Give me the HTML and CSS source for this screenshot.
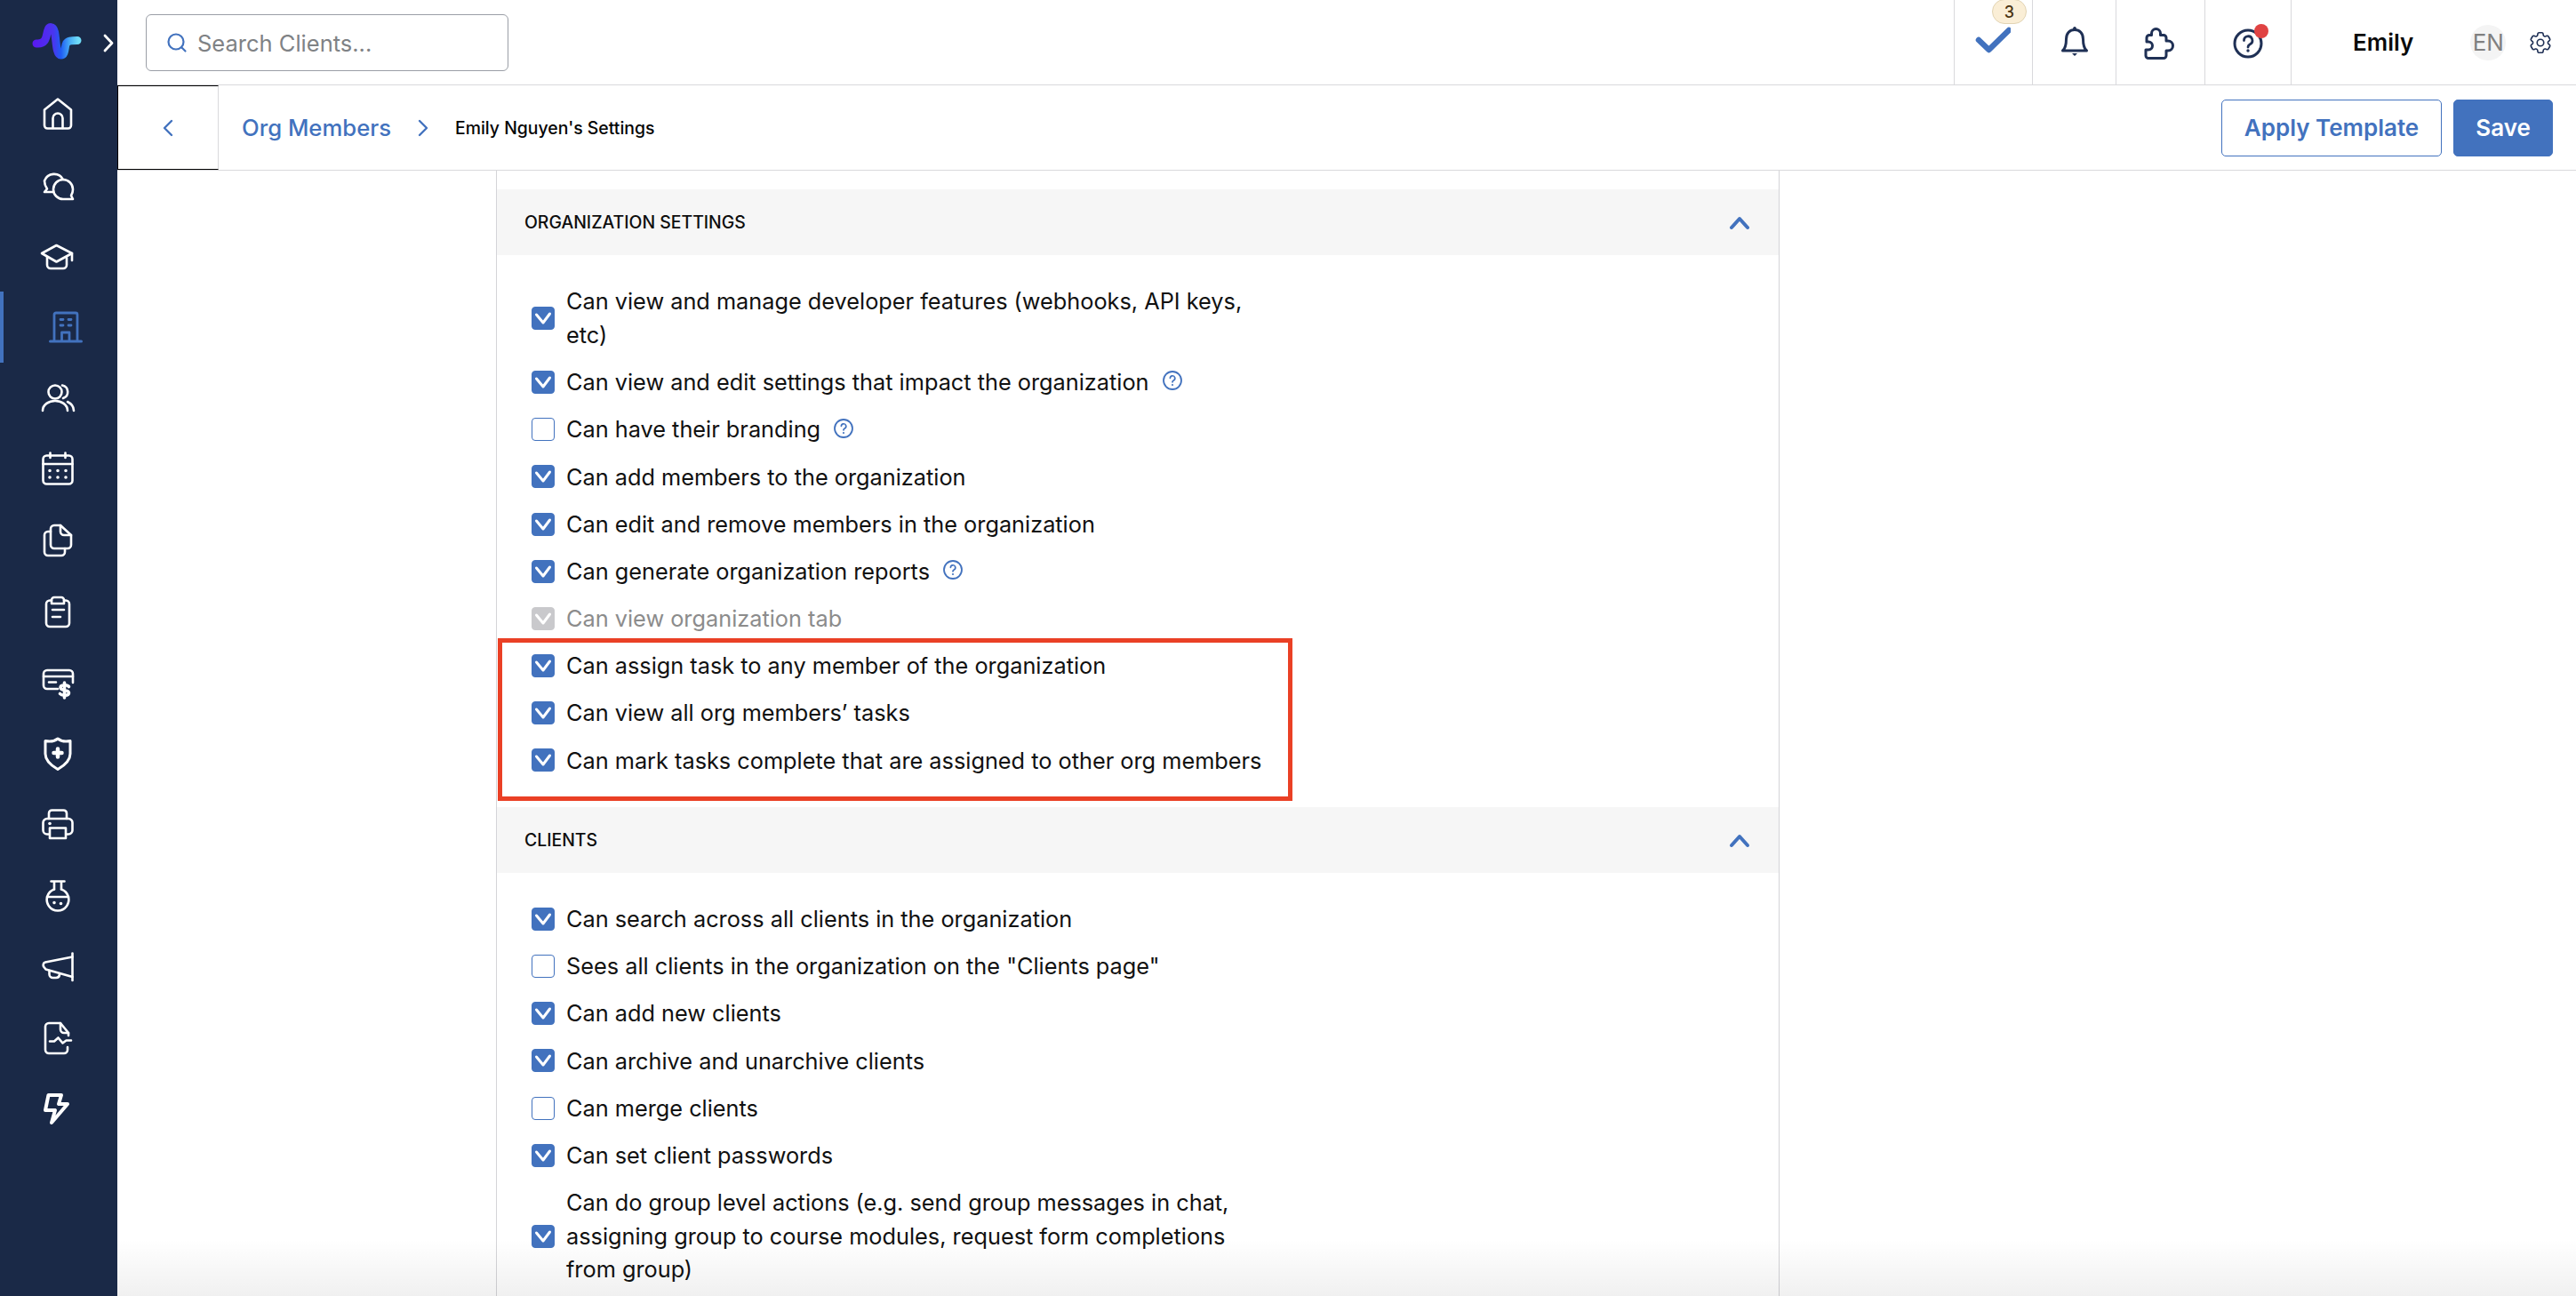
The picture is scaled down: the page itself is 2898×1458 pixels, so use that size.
FILE: index.html
```html
<!DOCTYPE html>
<html lang="en">
<head>
<meta charset="utf-8">
<title>Emily Nguyen's Settings</title>
<link rel="stylesheet" href="styles.css">
</head>
<body>
<svg class="defs" width="0" height="0" aria-hidden="true">
  <defs>
    <symbol id="tick" viewBox="0 0 26 26"><path d="M5.5 9 L13 18 L20.5 8" fill="none" stroke="#fff" stroke-width="3" stroke-linecap="round" stroke-linejoin="round"/></symbol>
    <symbol id="hint" viewBox="0 0 24 24"><circle cx="12" cy="12" r="10" fill="none" stroke="currentColor" stroke-width="1.8"/><path d="M9.4 9.4a2.7 2.7 0 1 1 3.9 2.5c-.8.4-1.3 1-1.3 1.9" fill="none" stroke="currentColor" stroke-width="1.7" stroke-linecap="round"/><circle cx="12" cy="17" r="1.1" fill="currentColor"/></symbol>
    <symbol id="caret-up" viewBox="0 0 24 24"><path d="M3 17 L12 7 L21 17" fill="none" stroke="currentColor" stroke-width="4" stroke-linecap="round" stroke-linejoin="round"/></symbol>
    <linearGradient id="logo-grad" x1="37" y1="0" x2="88" y2="0" gradientUnits="userSpaceOnUse">
      <stop offset="0" stop-color="#5a18f0"/><stop offset=".45" stop-color="#4a35ee"/><stop offset=".62" stop-color="#1f5cf5"/><stop offset=".8" stop-color="#45a8f5"/><stop offset="1" stop-color="#6fdcf8"/>
    </linearGradient>
  </defs>
</svg>
<div class="app">
  <aside class="sidebar">
    <div class="brand">
      <svg class="logo" width="132" height="88" viewBox="0 0 132 88"><path d="M41 49 C52 50 52 41 53.500 35 C55 29 60 29 61.500 36 C63.500 46 63 62 68.500 62 C74 62 72.500 52 74.500 49 C76 46 80 45.500 87 45.500" fill="none" stroke="url(#logo-grad)" stroke-width="9" stroke-linecap="round"/><path d="M118 40 L126 48.500 L118 57" fill="none" stroke="#fff" stroke-width="2.800" stroke-linecap="round" stroke-linejoin="round"/></svg>
    </div>
    <nav class="nav">
      <a class="nav-item"><svg class="nav-icon" viewBox="0 0 40 40"><path d="M5 15.500 L20 3.500 L35 15.500 V33 a3.500 3.500 0 0 1 -3.500 3.500 H8.500 A3.500 3.500 0 0 1 5 33Z"/><path d="M14.500 36 V25 a5.500 5.500 0 0 1 11 0 V36"/></svg></a>
      <a class="nav-item"><svg class="nav-icon" viewBox="0 0 40 40"><path d="M26 14 A11.500 11.500 0 0 0 5 15.500 C5 19.500 6.300 22 8 24.500 L5 28 L14.500 28"/><path d="M37 25 A11 11 0 1 0 26 36 H37 L35 32 C36.300 30 37 27.500 37 25Z"/></svg></a>
      <a class="nav-item"><svg class="nav-icon" viewBox="0 0 40 40"><path d="M18.500 7 L36 16 L18.500 25.500 L2 16Z"/><path d="M8 20 V29 a4 4 0 0 0 4 4 H26 a4 4 0 0 0 4 -4 V21"/><path d="M36 16 V24"/></svg></a>
      <a class="nav-item active"><svg class="nav-icon building" viewBox="0 0 40 40"><path d="M7 35 V6 a2 2 0 0 1 2 -2 H31 a2 2 0 0 1 2 2 V35"/><path d="M2.500 36 H37.500" stroke-width="3"/><path d="M15.500 35 V26 H24 V35"/><path d="M14 11.500 H17 M23 11.500 H26 M14 18 H17 M23 18 H26"/></svg></a>
      <a class="nav-item"><svg class="nav-icon" viewBox="0 0 40 40"><circle cx="17" cy="13" r="7.500"/><path d="M3 34 C3 27 10 23 17 23 C24 23 31 27 31 34"/><path d="M25 5.500 a7.500 7.500 0 0 1 1 14.500"/><path d="M31 24 C35 26 38 30 38 34"/></svg></a>
      <a class="nav-item"><svg class="nav-icon" viewBox="0 0 40 40"><rect x="3.500" y="4.500" width="33" height="32" rx="4"/><path d="M3.500 14 H36.500 M11.500 1.500 V7 M28.500 1.500 V7"/><path class="dots" d="M11 21.500 h.01 M20 21.500 h.01 M29 21.500 h.01 M11 29 h.01 M20 29 h.01 M29 29 h.01"/></svg></a>
      <a class="nav-item"><svg class="nav-icon" viewBox="0 0 40 40"><path d="M16 3 H23 L35 14 V25 a4 4 0 0 1 -4 4 H16 a4 4 0 0 1 -4 -4 V7 a4 4 0 0 1 4 -4Z"/><path d="M23 3 V10 a4 4 0 0 0 4 4 H35"/><path d="M12 10 H9 a4 4 0 0 0 -4 4 V33 a4 4 0 0 0 4 4 H24 a4 4 0 0 0 4 -4 V29"/></svg></a>
      <a class="nav-item"><svg class="nav-icon" viewBox="0 0 40 40"><path d="M13 7.500 H11 a4 4 0 0 0 -4 4 V33 a4 4 0 0 0 4 4 H29 a4 4 0 0 0 4 -4 V11.500 a4 4 0 0 0 -4 -4 H27"/><path d="M13 11 V7 a3 3 0 0 1 3 -3 H24 a3 3 0 0 1 3 3 V11Z"/><path d="M14 18 H27 M14 26 H23"/></svg></a>
      <a class="nav-item"><svg class="nav-icon" viewBox="0 0 40 40"><path d="M20 27 H8 a4 4 0 0 1 -4 -4 V10 a4 4 0 0 1 4 -4 H33 a4 4 0 0 1 4 4 V20"/><path d="M4 13 H37 M10 19.500 H18"/><path d="M32.500 24.500 C31 22 23 22 23 25.500 C23 29.500 32.500 27.500 32.500 31.500 C32.500 35 24.500 35 22.500 32.500 M27.500 20 V37" stroke-width="3.600"/></svg></a>
      <a class="nav-item"><svg class="nav-icon" viewBox="0 0 40 40"><path d="M20 3 C23 5.500 29 6.500 34 5.500 V20 C34 28 27 33.500 20 37.500 C13 33.500 6 28 6 20 V5.500 C11 6.500 17 5.500 20 3Z" stroke-width="3"/><path d="M20 14.500 V23.500 M15.500 19 H24.500" stroke-width="4.500"/></svg></a>
      <a class="nav-item"><svg class="nav-icon" viewBox="0 0 40 40"><path d="M10 13 V7 a3.500 3.500 0 0 1 3.500 -3.500 H26.500 A3.500 3.500 0 0 1 30 7 V13"/><path d="M10 30.500 H8 a4.500 4.500 0 0 1 -4.500 -4.500 V17.500 A4.500 4.500 0 0 1 8 13 H32 a4.500 4.500 0 0 1 4.500 4.500 V26 a4.500 4.500 0 0 1 -4.500 4.500 H30"/><path d="M11 23.500 H29 V35 H11Z"/><path class="dots" d="M11 18.500 h.01"/></svg></a>
      <a class="nav-item"><svg class="nav-icon" viewBox="0 0 40 40"><path d="M12.500 3.500 H27.500 M16 3.500 V12 M24 3.500 V12"/><path d="M16 12.500 A12.300 12.300 0 1 0 24 12.500"/><path d="M8 21 H32"/><path class="dots" d="M16 27.500 h.01 M23.500 28.500 h.01"/></svg></a>
      <a class="nav-item"><svg class="nav-icon" viewBox="0 0 40 40"><path d="M36.500 4.500 V35"/><path d="M36.500 8.500 L6 14.500 C3.500 15 3 18 4.500 20 L6.500 22.500 L36.500 31"/><path d="M10.500 24 V28 a4 4 0 0 0 4 4 H18 a4 4 0 0 0 4 -3.500"/></svg></a>
      <a class="nav-item"><svg class="nav-icon" viewBox="0 0 40 40"><path d="M31 30 V33 a4 4 0 0 1 -4 4 H10 a4 4 0 0 1 -4 -4 V7 a4 4 0 0 1 4 -4 H23 L32 14 V17"/><path d="M23 3 V10 a4 4 0 0 0 4 4 H32"/><path d="M11 23.500 H16 L20.500 19.500 L25.500 25.500 L29.500 22.500 H35"/></svg></a>
      <a class="nav-item"><svg class="nav-icon bolt" viewBox="0 0 40 40"><path d="M9.500 4 H24 L21 14 H31 L13 35 L17 21 H6Z"/></svg></a>
    </nav>
  </aside>

  <div class="main">
    <header class="topbar">
      <label class="search">
        <svg class="search-icon" viewBox="0 0 24 24"><circle cx="11" cy="11" r="8.500"/><path d="M17.500 17.500 L21.500 21.500"/></svg>
        <span class="search-text">Search Clients...</span>
      </label>
      <div class="tools">
        <div class="tool tool-check">
          <span class="badge">3</span>
          <svg class="tool-icon" viewBox="0 0 40 40"><path class="check-mark" d="M4 17 L15.500 28 L38 6"/></svg>
        </div>
        <div class="tool tool-bell">
          <svg class="tool-icon" viewBox="0 0 40 40"><path d="M6.500 30 C10 27 10.500 22 10.500 17 C10.500 10.500 14.500 6.500 20 6.500 C25.500 6.500 29.500 10.500 29.500 17 C29.500 22 30 27 33.500 30Z"/><path class="solid" d="M18 6 a2 3 0 0 1 4 0Z M17 33 H23 L20 36Z"/></svg>
        </div>
        <div class="tool tool-puzzle">
          <svg class="tool-icon" viewBox="0 0 40 40"><path d="M8 36.500 H25 a3 3 0 0 0 3 -3 V28 h2 a5.500 5.500 0 0 0 0 -11 h-2 V13.500 a3 3 0 0 0 -3 -3 H21.500 V8.500 a5 5 0 0 0 -10 0 V10.500 H9 a3 3 0 0 0 -3 3 V18 h2 a4.500 4.500 0 0 1 0 9 H5 V33.500 a3 3 0 0 0 3 3Z"/></svg>
        </div>
        <div class="tool tool-help">
          <svg class="tool-icon" viewBox="0 0 40 40"><circle cx="20" cy="22" r="15"/><path class="thin" d="M15.500 18.500 a4.700 4.700 0 1 1 6.800 4.200 c-1.500.8 -2.300 1.700 -2.300 3.300"/><circle class="solid" cx="20" cy="30" r="1.700"/></svg>
          <span class="dot"></span>
        </div>
        <div class="account">
          <span class="account-name">Emily</span>
          <span class="lang">EN</span>
          <svg class="gear" viewBox="0 0 24 24"><path d="M9.594 3.940c.09-.542.56-.94 1.110-.94h2.593c.55 0 1.020.398 1.110.94l.213 1.281c.063.374.313.686.645.870.074.040.147.083.220.127.325.196.72.257 1.075.124l1.217-.456a1.125 1.125 0 0 1 1.370.490l1.296 2.247a1.125 1.125 0 0 1-.26 1.431l-1.003.827c-.293.241-.438.613-.43.992a7.723 7.723 0 0 1 0 .255c-.008.378.137.75.43.991l1.004.827c.424.35.534.955.26 1.430l-1.298 2.247a1.125 1.125 0 0 1-1.369.491l-1.217-.456c-.355-.133-.75-.072-1.076.124a6.470 6.470 0 0 1-.22.128c-.331.183-.581.495-.644.869l-.213 1.281c-.09.543-.56.94-1.110.94h-2.594c-.55 0-1.019-.398-1.110-.94l-.213-1.281c-.062-.374-.312-.686-.644-.87a6.520 6.520 0 0 1-.22-.127c-.325-.196-.72-.257-1.076-.124l-1.217.456a1.125 1.125 0 0 1-1.369-.49l-1.297-2.247a1.125 1.125 0 0 1 .26-1.431l1.004-.827c.292-.24.437-.613.43-.991a6.932 6.932 0 0 1 0-.255c.007-.38-.138-.751-.43-.992l-1.004-.827a1.125 1.125 0 0 1-.26-1.430l1.297-2.247a1.125 1.125 0 0 1 1.370-.491l1.216.456c.356.133.751.072 1.076-.124.072-.044.146-.086.22-.128.332-.183.582-.495.644-.869l.214-1.280Z"/><circle cx="12" cy="12" r="3"/></svg>
        </div>
      </div>
    </header>

    <div class="subbar">
      <button class="back"><svg class="chev" viewBox="0 0 16 24"><path d="M12 4 L4 12 L12 20"/></svg></button>
      <div class="crumbs">
        <a class="crumb-link">Org Members</a>
        <svg class="chev crumb-sep" viewBox="0 0 16 24"><path d="M4 4 L12 12 L4 20"/></svg>
        <span class="crumb-current">Emily Nguyen's Settings</span>
      </div>
      <div class="actions">
        <button class="btn btn-outline">Apply Template</button>
        <button class="btn btn-solid">Save</button>
      </div>
    </div>

    <div class="content">
      <div class="panel">
        <section class="group">
          <div class="group-head"><span>ORGANIZATION SETTINGS</span><svg class="caret"><use href="#caret-up"/></svg></div>
          <ul class="perms">
            <li class="perm"><span class="box on"><svg><use href="#tick"/></svg></span><span class="perm-text">Can view and manage developer features (webhooks, API keys, etc)</span></li>
            <li class="perm"><span class="box on"><svg><use href="#tick"/></svg></span><span class="perm-text">Can view and edit settings that impact the organization</span><svg class="hint"><use href="#hint"/></svg></li>
            <li class="perm"><span class="box"></span><span class="perm-text">Can have their branding</span><svg class="hint"><use href="#hint"/></svg></li>
            <li class="perm"><span class="box on"><svg><use href="#tick"/></svg></span><span class="perm-text">Can add members to the organization</span></li>
            <li class="perm"><span class="box on"><svg><use href="#tick"/></svg></span><span class="perm-text">Can edit and remove members in the organization</span></li>
            <li class="perm"><span class="box on"><svg><use href="#tick"/></svg></span><span class="perm-text">Can generate organization reports</span><svg class="hint"><use href="#hint"/></svg></li>
            <li class="perm disabled"><span class="box on"><svg><use href="#tick"/></svg></span><span class="perm-text">Can view organization tab</span></li>
            <li class="perm"><span class="box on"><svg><use href="#tick"/></svg></span><span class="perm-text">Can assign task to any member of the organization</span></li>
            <li class="perm"><span class="box on"><svg><use href="#tick"/></svg></span><span class="perm-text">Can view all org members’ tasks</span></li>
            <li class="perm"><span class="box on"><svg><use href="#tick"/></svg></span><span class="perm-text">Can mark tasks complete that are assigned to other org members</span></li>
          </ul>
        </section>
        <section class="group">
          <div class="group-head"><span>CLIENTS</span><svg class="caret"><use href="#caret-up"/></svg></div>
          <ul class="perms">
            <li class="perm"><span class="box on"><svg><use href="#tick"/></svg></span><span class="perm-text">Can search across all clients in the organization</span></li>
            <li class="perm"><span class="box"></span><span class="perm-text">Sees all clients in the organization on the "Clients page"</span></li>
            <li class="perm"><span class="box on"><svg><use href="#tick"/></svg></span><span class="perm-text">Can add new clients</span></li>
            <li class="perm"><span class="box on"><svg><use href="#tick"/></svg></span><span class="perm-text">Can archive and unarchive clients</span></li>
            <li class="perm"><span class="box"></span><span class="perm-text">Can merge clients</span></li>
            <li class="perm"><span class="box on"><svg><use href="#tick"/></svg></span><span class="perm-text">Can set client passwords</span></li>
            <li class="perm"><span class="box on"><svg><use href="#tick"/></svg></span><span class="perm-text">Can do group level actions (e.g. send group messages in chat, assigning group to course modules, request form completions from group)</span></li>
          </ul>
        </section>
      </div>
    </div>
  </div>
</div>
<div class="callout"></div>
<div class="fade"></div>
</body>
</html>
```

FILE: styles.css
```css
* { box-sizing: border-box; }
html, body { margin: 0; padding: 0; height: 100%; }
body {
  position: relative;
  overflow: hidden;
  background: #fff;
  color: #111;
  font-family: Inter, "Liberation Sans", sans-serif;
}
.defs { position: absolute; }
.app {
  display: grid;
  grid-template-columns: 132px 1fr;
  height: 1458px;
  overflow: hidden;
}

/* sidebar */
.sidebar { background: #1a2947; display: flex; flex-direction: column; }
.brand { height: 88px; }
.logo { display: block; }
.nav { display: flex; flex-direction: column; }
.nav-item {
  position: relative;
  height: 80px;
  display: flex;
  align-items: center;
  justify-content: center;
  color: #fff;
}
.nav-item:nth-child(3) { padding-top: 2px; }
.nav-item.active { color: #4272be; }
.nav-item.active::before {
  content: "";
  position: absolute;
  left: 0; top: 0; bottom: 0;
  width: 4px;
  background: #4272be;
}
.nav-icon {
  width: 40px; height: 40px;
  margin-left: -2px;
  fill: none;
  stroke: currentColor;
  stroke-width: 2.6;
  stroke-linecap: round;
  stroke-linejoin: round;
}
.nav-icon.building { margin-left: 15px; stroke-width: 2.8; }
.nav-icon.bolt { stroke-width: 4; }
.dots { stroke-width: 3.6; }

/* top bar */
.main { display: flex; flex-direction: column; min-width: 0; }
.topbar {
  height: 96px;
  flex: none;
  display: flex;
  align-items: stretch;
  border-bottom: 1px solid #d9d9dc;
  padding-left: 32px;
}
.search {
  width: 408px; height: 64px;
  margin-top: 16px;
  display: flex;
  align-items: center;
  gap: 11px;
  padding-left: 22px;
  border: 1px solid #9a9ea6;
  border-radius: 6px;
}
.search-icon { width: 24px; height: 24px; fill: none; stroke: #4272be; stroke-width: 2.2; stroke-linecap: round; }
.search-text { font-size: 25.5px; color: #7f8285; }
.tools { margin-left: auto; display: flex; align-items: stretch; }
.tool {
  position: relative;
  display: flex;
  align-items: center;
  justify-content: center;
  border-left: 1px solid #d9d9dc;
}
.tool-check { width: 88px; }
.tool-bell { width: 94px; }
.tool-puzzle { width: 100px; }
.tool-help { width: 97px; }
.tool-icon {
  width: 40px; height: 40px;
  fill: none;
  stroke: #1f3055;
  stroke-width: 3;
  stroke-linecap: round;
  stroke-linejoin: round;
}
.tool-icon .solid { fill: #1f3055; stroke: none; }
.tool-icon .thin { stroke-width: 2.8; }
.tool-icon .check-mark { stroke: #4272be; stroke-width: 6.5; }
.tool-check .tool-icon { margin-left: -2px; }
.tool-bell .tool-icon { margin-top: -1px; }
.tool-puzzle .tool-icon { margin-top: 2px; margin-left: -3px; }
.tool-help .tool-icon { margin-top: -1px; }
.badge {
  position: absolute;
  left: 42px; top: -1px;
  width: 39px; height: 28px;
  display: flex;
  align-items: center;
  justify-content: center;
  background: #faeed6;
  border: 1px solid #e2d4b4;
  border-radius: 14px;
  font-size: 18px;
  font-weight: 500;
  color: #4a3412;
}
.dot {
  position: absolute;
  left: 55px; top: 27px;
  width: 16px; height: 16px;
  border-radius: 50%;
  background: #e04343;
}
.account {
  width: 321px;
  display: flex;
  align-items: center;
  padding-left: 69px;
  border-left: 1px solid #d9d9dc;
}
.account-name { font-size: 26px; font-weight: 600; color: #0a0a0a; }
.lang {
  margin-left: 64px;
  width: 40px; height: 40px;
  border-radius: 50%;
  background: #f4f4f4;
  color: #808080;
  font-size: 26px;
  line-height: 40px;
  text-align: center;
  display: flex;
  align-items: center;
  justify-content: center;
}
.gear { margin-left: 24px; width: 30px; height: 30px; fill: none; stroke: #1f3055; stroke-width: 1.3; }

/* sub bar */
.subbar {
  height: 96px;
  flex: none;
  display: flex;
  align-items: center;
  border-bottom: 1px solid #d9d9dc;
  padding-right: 26px;
}
.chev { width: 16px; height: 24px; fill: none; stroke: #4272be; stroke-width: 2.4; stroke-linecap: round; stroke-linejoin: round; }
.back {
  width: 114px; height: 95px;
  padding: 0;
  background: #fff;
  border: 1px solid #000;
  border-right: 1px solid #d9d9dc;
  display: flex;
  align-items: center;
  justify-content: center;
}
.crumbs { display: flex; align-items: center; padding-left: 26px; }
.crumb-link { font-size: 25.7px; font-weight: 500; color: #4272be; }
.crumb-sep { margin-left: 28px; margin-right: 28px; }
.crumb-current { font-size: 19.4px; font-weight: 500; color: #050505; }
.actions { margin-left: auto; display: flex; gap: 13px; }
.btn {
  height: 64px;
  border-radius: 5px;
  font-family: inherit;
  font-size: 26px;
  font-weight: 600;
  border: 1px solid #4272be;
}
.btn-outline { width: 248px; background: #fff; color: #4272be; }
.btn-solid { width: 112px; background: #4272be; color: #fff; }

/* settings panel */
.content { flex: 1; min-height: 0; overflow: hidden; }
.panel {
  margin-left: 426px;
  width: 1444px;
  height: 100%;
  padding-top: 21px;
  border-left: 1px solid #d4d4d8;
  border-right: 1px solid #d4d4d8;
}
.group-head {
  height: 74px;
  display: flex;
  align-items: center;
  justify-content: space-between;
  padding: 0 32px 0 31px;
  background: #f6f6f6;
  font-size: 19.4px;
  font-weight: 500;
  color: #0d0d0d;
}
.caret { width: 24px; height: 24px; color: #4272be; margin-top: 2px; }
.perms { list-style: none; margin: 0; padding: 25.6px 0 25.6px 39px; }
.perm { display: flex; align-items: center; padding: 7.8px 0; font-size: 25.3px; line-height: 37.6px; }
.perm-text { max-width: 790px; margin-left: 13px; }
.box {
  flex: none;
  width: 26px; height: 26px;
  border: 1px solid #4272be;
  border-radius: 4px;
  background: #fff;
}
.box.on { background: #4272be; }
.box svg { display: block; width: 26px; height: 26px; margin: -1px; }
.hint { flex: none; width: 24px; height: 24px; margin-left: 14px; margin-top: -3px; color: #4272be; }
.disabled .box { background: #c9c9cc; border-color: #c9c9cc; }
.disabled .perm-text { color: #8c8c8c; }

/* overlays */
.callout {
  position: absolute;
  left: 560px; top: 718px;
  width: 894px; height: 183px;
  border: 5px solid #ea4025;
  pointer-events: none;
}
.fade {
  position: absolute;
  left: 132px; right: 0; bottom: 0;
  height: 64px;
  background: linear-gradient(to bottom, rgba(0,0,0,0), rgba(0,0,0,.06));
  pointer-events: none;
}
```
